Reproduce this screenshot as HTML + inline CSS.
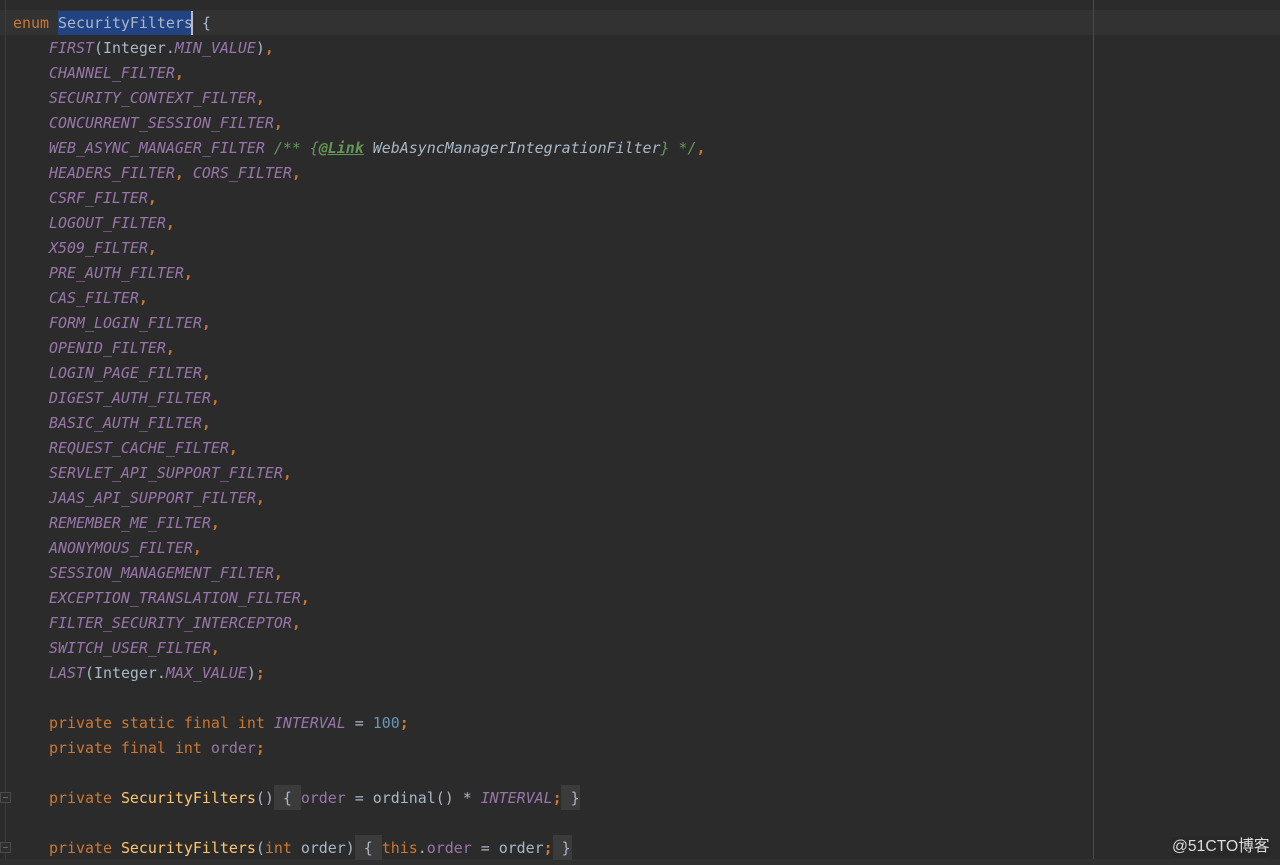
<!DOCTYPE html>
<html><head><meta charset="utf-8">
<style>
html,body{margin:0;padding:0;background:#2b2b2b;}
#p{position:relative;width:1280px;height:865px;overflow:hidden;background:#2b2b2b;}
#x{position:absolute;left:0;top:1px;width:1280px;height:864px;filter:blur(0.35px);}
.l{position:absolute;left:13px;height:25px;line-height:25px;white-space:pre;font-family:"DejaVu Sans Mono","Liberation Mono",monospace;font-size:14.95px;color:#a9b7c6;}
.k{color:#cc7832}.f{color:#9876aa;font-style:italic}.o{color:#cc7832;font-weight:bold}.m{color:#ffc66d}.n{color:#6897bb}
.c{color:#629755;font-style:italic}.t{font-weight:bold;text-decoration:underline;color:#629755}.d{color:#a9b7c6;font-style:italic}
.v{color:#9876aa}
.b{position:absolute;background:#3b3b3b}
.fold{position:absolute;left:0;width:9px;height:9px;border:1px solid #4a4a4a;background:#2e2e2e}
.fold:after{content:"";position:absolute;left:2px;top:4px;width:5px;height:1px;background:#666}
</style></head><body><div id="p">
<div style="position:absolute;left:0;top:10px;width:1280px;height:25px;background:#323232"></div>
<div style="position:absolute;left:58px;top:11px;width:134px;height:24px;background:#214283"></div>
<div style="position:absolute;left:191px;top:11px;width:2px;height:24px;background:#bbbbbb"></div>
<div style="position:absolute;left:5px;top:0;width:1px;height:865px;background:#3c3c3c"></div>
<div style="position:absolute;left:1093px;top:0;width:1px;height:865px;background:#4a4a4a"></div>
<div style="position:absolute;left:0;top:859px;width:1280px;height:6px;background:#303030"></div>
<div class="b" style="left:274px;top:785px;width:27px;height:25px"></div>
<div class="b" style="left:561px;top:785px;width:19px;height:25px"></div>
<div class="b" style="left:355px;top:835px;width:27px;height:25px"></div>
<div class="b" style="left:553px;top:835px;width:19px;height:25px"></div>
<div class="fold" style="top:792px"></div>
<div class="fold" style="top:842px"></div>
<div id="x">
<div class="l" style="top:10px"><span class="k">enum</span> <span style="color:#a9b7c6">SecurityFilters</span> {</div>
<div class="l" style="top:35px">    <span class="f">FIRST</span>(Integer.<span class="f">MIN_VALUE</span>)<span class="o">,</span></div>
<div class="l" style="top:60px">    <span class="f">CHANNEL_FILTER</span><span class="o">,</span></div>
<div class="l" style="top:85px">    <span class="f">SECURITY_CONTEXT_FILTER</span><span class="o">,</span></div>
<div class="l" style="top:110px">    <span class="f">CONCURRENT_SESSION_FILTER</span><span class="o">,</span></div>
<div class="l" style="top:135px">    <span class="f">WEB_ASYNC_MANAGER_FILTER</span> <span class="c">/** {<span class="t">@Link</span> <span class="d">WebAsyncManagerIntegrationFilter</span>} */</span><span class="o">,</span></div>
<div class="l" style="top:160px">    <span class="f">HEADERS_FILTER</span><span class="o">,</span> <span class="f">CORS_FILTER</span><span class="o">,</span></div>
<div class="l" style="top:185px">    <span class="f">CSRF_FILTER</span><span class="o">,</span></div>
<div class="l" style="top:210px">    <span class="f">LOGOUT_FILTER</span><span class="o">,</span></div>
<div class="l" style="top:235px">    <span class="f">X509_FILTER</span><span class="o">,</span></div>
<div class="l" style="top:260px">    <span class="f">PRE_AUTH_FILTER</span><span class="o">,</span></div>
<div class="l" style="top:285px">    <span class="f">CAS_FILTER</span><span class="o">,</span></div>
<div class="l" style="top:310px">    <span class="f">FORM_LOGIN_FILTER</span><span class="o">,</span></div>
<div class="l" style="top:335px">    <span class="f">OPENID_FILTER</span><span class="o">,</span></div>
<div class="l" style="top:360px">    <span class="f">LOGIN_PAGE_FILTER</span><span class="o">,</span></div>
<div class="l" style="top:385px">    <span class="f">DIGEST_AUTH_FILTER</span><span class="o">,</span></div>
<div class="l" style="top:410px">    <span class="f">BASIC_AUTH_FILTER</span><span class="o">,</span></div>
<div class="l" style="top:435px">    <span class="f">REQUEST_CACHE_FILTER</span><span class="o">,</span></div>
<div class="l" style="top:460px">    <span class="f">SERVLET_API_SUPPORT_FILTER</span><span class="o">,</span></div>
<div class="l" style="top:485px">    <span class="f">JAAS_API_SUPPORT_FILTER</span><span class="o">,</span></div>
<div class="l" style="top:510px">    <span class="f">REMEMBER_ME_FILTER</span><span class="o">,</span></div>
<div class="l" style="top:535px">    <span class="f">ANONYMOUS_FILTER</span><span class="o">,</span></div>
<div class="l" style="top:560px">    <span class="f">SESSION_MANAGEMENT_FILTER</span><span class="o">,</span></div>
<div class="l" style="top:585px">    <span class="f">EXCEPTION_TRANSLATION_FILTER</span><span class="o">,</span></div>
<div class="l" style="top:610px">    <span class="f">FILTER_SECURITY_INTERCEPTOR</span><span class="o">,</span></div>
<div class="l" style="top:635px">    <span class="f">SWITCH_USER_FILTER</span><span class="o">,</span></div>
<div class="l" style="top:660px">    <span class="f">LAST</span>(Integer.<span class="f">MAX_VALUE</span>)<span class="o">;</span></div>
<div class="l" style="top:710px">    <span class="k">private static final int</span> <span class="f">INTERVAL</span> = <span class="n">100</span><span class="o">;</span></div>
<div class="l" style="top:735px">    <span class="k">private final int</span> <span class="v">order</span><span class="o">;</span></div>
<div class="l" style="top:785px">    <span class="k">private</span> <span class="m">SecurityFilters</span>() { <span class="v">order</span> = ordinal() * <span class="f">INTERVAL</span><span class="o">;</span> }</div>
<div class="l" style="top:835px">    <span class="k">private</span> <span class="m">SecurityFilters</span>(<span class="k">int</span> order) { <span class="k">this</span>.<span class="v">order</span> = order<span class="o">;</span> }</div>
</div>
<div style="position:absolute;left:1172px;top:837px;height:20px;line-height:20px;font-family:'Liberation Sans','Noto Sans CJK SC',sans-serif;font-size:15.7px;color:#dcdcdc;white-space:pre;background:#282828">@51CTO博客</div>
</div></body></html>
